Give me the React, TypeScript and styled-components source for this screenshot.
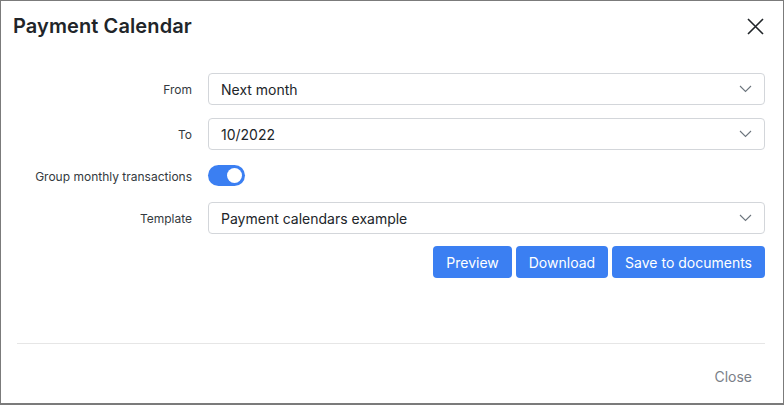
import React, { useState } from 'react';
import styled, { createGlobalStyle } from 'styled-components';

const GlobalStyle = createGlobalStyle`
  html, body {
    margin: 0;
    padding: 0;
    background: #ffffff;
  }
  body {
    font-family: Inter, "Noto Sans", "Liberation Sans", sans-serif;
    color: #212529;
  }
  * {
    box-sizing: border-box;
  }
`;

const Modal = styled.div`
  width: 784px;
  height: 405px;
  border: 1px solid #7b7b7b;
  border-bottom-width: 2px;
  background: #ffffff;
  display: flex;
  flex-direction: column;
`;

const Header = styled.div`
  display: flex;
  justify-content: space-between;
  align-items: center;
  height: 50px;
  padding: 0 16px 0 12px;
`;

const Title = styled.h2`
  margin: 0;
  font-size: 20px;
  font-weight: 600;
  color: #212529;
  letter-spacing: 0.1px;
`;

const CloseIcon = styled.button`
  width: 24px;
  height: 24px;
  padding: 0;
  border: none;
  background: transparent;
  display: flex;
  align-items: center;
  justify-content: center;
  cursor: pointer;
`;

const Body = styled.div`
  padding: 22px 18px 0 0;
  display: flex;
  flex-direction: column;
  gap: 13px;
`;

const Row = styled.div<{ $height?: number }>`
  display: grid;
  grid-template-columns: 191px 1fr;
  column-gap: 16px;
  align-items: center;
  height: ${p => p.$height ?? 32}px;
`;

const Label = styled.label`
  text-align: right;
  font-size: 12px;
  color: #343a40;
`;

const SelectBox = styled.div`
  position: relative;
  height: 32px;
  border: 1px solid #d3d6da;
  border-radius: 4px;
  padding: 0 12px;
  display: flex;
  align-items: center;
  justify-content: space-between;
  font-size: 14px;
  color: #212529;
  cursor: pointer;
`;

const Toggle = styled.button<{ $on: boolean }>`
  position: relative;
  width: 37px;
  height: 21px;
  margin-top: 2px;
  padding: 0;
  border: none;
  border-radius: 11px;
  background: ${p => (p.$on ? '#3b7ff2' : '#c8cdd3')};
  cursor: pointer;

  &::after {
    content: "";
    position: absolute;
    top: 3px;
    left: ${p => (p.$on ? '19px' : '3px')};
    width: 15px;
    height: 15px;
    border-radius: 50%;
    background: #ffffff;
  }
`;

const Actions = styled.div`
  display: flex;
  justify-content: flex-end;
  gap: 4px;
  margin-top: -1px;
`;

const PrimaryButton = styled.button`
  height: 32px;
  padding: 0 13px;
  border: none;
  border-radius: 4px;
  background: #3b7ff2;
  color: #ffffff;
  font-family: inherit;
  font-size: 14px;
  cursor: pointer;
`;

const Spacer = styled.div`
  flex: 1;
`;

const Divider = styled.hr`
  margin: 0 18px 0 16px;
  border: none;
  border-top: 1px solid #e6e6e6;
`;

const Footer = styled.div`
  display: flex;
  justify-content: flex-end;
  align-items: center;
  height: 59px;
  padding: 5px 18px 0 0;
`;

const GhostButton = styled.button`
  height: 32px;
  padding: 0 13px;
  border: none;
  background: transparent;
  color: #7a8088;
  font-family: inherit;
  font-size: 14px;
  cursor: pointer;
`;

const Chevron = () => (
  <svg width="13" height="8" viewBox="0 0 13 8" fill="none">
    <path d="M1 1l5.5 5.5L12 1" stroke="#6c757d" strokeWidth="1.1" />
  </svg>
);

const Select: React.FC<{ value: string }> = ({ value }) => (
  <SelectBox>
    <span>{value}</span>
    <Chevron />
  </SelectBox>
);

const App: React.FC = () => {
  const [group, setGroup] = useState(true);

  return (
    <>
      <GlobalStyle />
      <Modal>
        <Header>
          <Title>Payment Calendar</Title>
          <CloseIcon aria-label="Close">
            <svg width="17" height="17" viewBox="0 0 17 17" fill="none">
              <path d="M1 1l15 15M16 1L1 16" stroke="#212529" strokeWidth="1.6" />
            </svg>
          </CloseIcon>
        </Header>

        <Body>
          <Row>
            <Label>From</Label>
            <Select value="Next month" />
          </Row>
          <Row>
            <Label>To</Label>
            <Select value="10/2022" />
          </Row>
          <Row $height={26}>
            <Label>Group monthly transactions</Label>
            <div>
              <Toggle $on={group} onClick={() => setGroup(!group)} />
            </div>
          </Row>
          <Row>
            <Label>Template</Label>
            <Select value="Payment calendars example" />
          </Row>
          <Actions>
            <PrimaryButton>Preview</PrimaryButton>
            <PrimaryButton>Download</PrimaryButton>
            <PrimaryButton>Save to documents</PrimaryButton>
          </Actions>
        </Body>

        <Spacer />
        <Divider />
        <Footer>
          <GhostButton>Close</GhostButton>
        </Footer>
      </Modal>
    </>
  );
};

export default App;
